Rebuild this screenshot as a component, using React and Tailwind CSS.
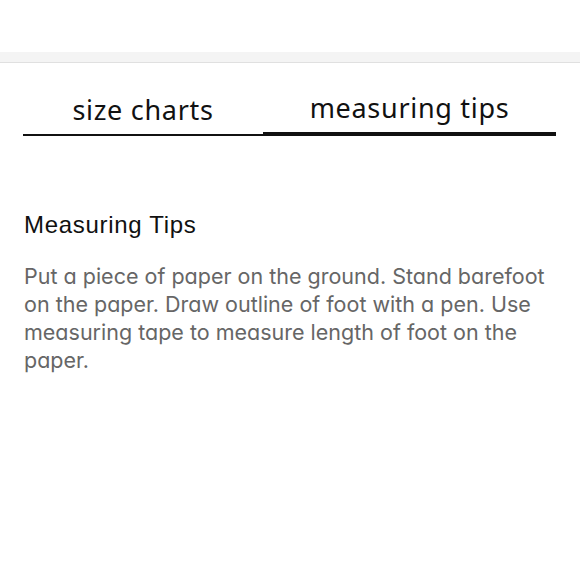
export default function App() {
  return (
    <div className="w-[580px] h-[580px] bg-white overflow-hidden">
      <div className="h-[52px] bg-white" />
      <div className="h-[11px] bg-[#f4f4f4] border-b border-[#e0e0e0]" />

      <div className="flex items-end h-[73px] ml-[23px] mr-[24px] font-['Noto_Sans',sans-serif] text-[27px] tracking-[0.7px] text-[#111]">
        <div className="w-[240px] text-center border-b-2 border-[#111] pb-[8px] leading-[32px]">size charts</div>
        <div className="flex-1 text-center border-b-4 border-[#111] pb-[8px] leading-[32px]">measuring tips</div>
      </div>

      <div className="px-[24px] pt-[74px]">
        <h2 className="font-['Liberation_Sans',sans-serif] text-[24px] tracking-[0.7px] leading-[30px] text-[#111]">Measuring Tips</h2>
        <p className="mt-[22px] font-['Inter',sans-serif] [font-feature-settings:'cv11'] text-[21.5px] leading-[28px] text-[#666]">
          Put a piece of paper on the ground. Stand barefoot on the paper. Draw outline of foot with a pen. Use measuring tape to measure length of foot on the paper.
        </p>
      </div>
    </div>
  );
}
